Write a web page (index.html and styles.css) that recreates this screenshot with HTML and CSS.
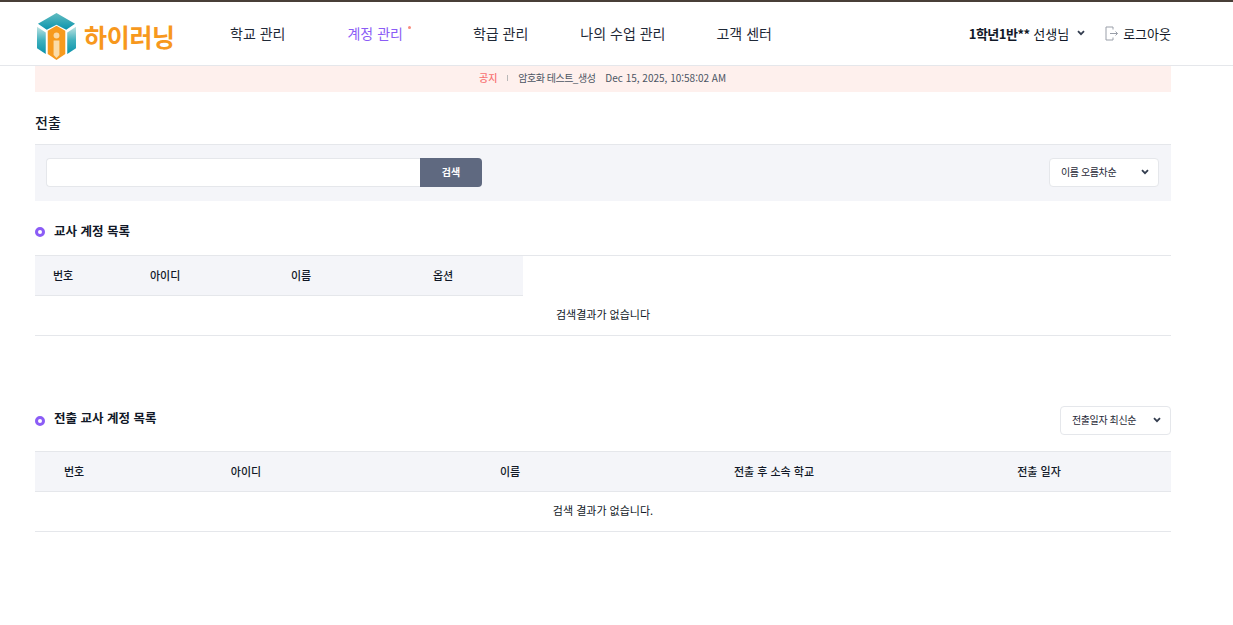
FILE: index.html
```html
<!DOCTYPE html>
<html lang="ko">
<head>
    <meta charset="UTF-8">
    <meta name="viewport" content="width=device-width, initial-scale=1.0">
    <title>전출</title>
    <link rel="stylesheet" href="styles.css">
</head>
<body>

    <header class="header">
        <div class="header-inner">
            <a class="logo" href="#">
                <svg class="logo-mark" width="39" height="47" viewBox="0 0 40 48">
                    <defs>
                        <linearGradient id="sideGrad" x1="0" y1="0" x2="0" y2="1">
                            <stop offset="0" stop-color="#bfe3e2"/>
                            <stop offset="0.5" stop-color="#3fb0bd"/>
                            <stop offset="1" stop-color="#0a93ab"/>
                        </linearGradient>
                        <linearGradient id="topGrad" x1="0" y1="0" x2="0" y2="1">
                            <stop offset="0" stop-color="#62bcc0"/>
                            <stop offset="1" stop-color="#0b94ae"/>
                        </linearGradient>
                    </defs>
                    <path d="M20 0 L39 11 L30 17 L20 12 L10 17 L1 11 Z" fill="url(#topGrad)"/>
                    <path d="M0 14 L9 20 L9 42 L0 36 Z" fill="url(#sideGrad)"/>
                    <path d="M40 14 L31 20 L31 42 L40 36 Z" fill="url(#sideGrad)"/>
                    <path d="M20 13 L29 18 L29 42 L20 48 L11 42 L11 18 Z" fill="#f79a1e"/>
                    <circle cx="20" cy="23" r="3" fill="#fbd9a5"/>
                    <path d="M17 28 H23 V43 L20 46 L17 43 Z" fill="#fbdca9"/>
                </svg>
                <span class="logo-text">하이러닝</span>
            </a>
            <nav class="gnb">
                <a class="gnb-item" href="#">학교 관리</a>
                <a class="gnb-item active" href="#">계정 관리<span class="dot"></span></a>
                <a class="gnb-item" href="#">학급 관리</a>
                <a class="gnb-item" href="#">나의 수업 관리</a>
                <a class="gnb-item" href="#">고객 센터</a>
            </nav>
            <div class="user-area">
                <span class="user-name"><strong>1학년1반**</strong> 선생님</span>
                <svg class="chev" width="8" height="6" viewBox="0 0 8 6"><path d="M1 1.2 L4 4.2 L7 1.2" fill="none" stroke="#333d4f" stroke-width="1.8"/></svg>
                <a class="logout" href="#">
                    <svg width="13" height="15" viewBox="0 0 13 15"><path d="M8 3.5 V1 H1 V14 H8 V11.5 M5 7.5 H12.5 M10.5 5.5 L12.5 7.5 L10.5 9.5" fill="none" stroke="#9a9fa9" stroke-width="1"/></svg>
                    로그아웃
                </a>
            </div>
        </div>
    </header>

    <main class="container">
        <div class="notice">
            <span class="notice-label">공지</span>
            <span class="notice-sep"></span>
            <span class="notice-title">암호화 테스트_생성</span>
            <span class="notice-date">Dec 15, 2025, 10:58:02 AM</span>
        </div>

        <h1 class="page-title">전출</h1>

        <form class="search-box">
            <div class="search-group">
                <input class="search-input" type="text">
                <button class="search-btn" type="button">검색</button>
            </div>
            <div class="select-box select-name">
                이름 오름차순
                <svg width="8" height="6" viewBox="0 0 8 6"><path d="M1 1.2 L4 4.2 L7 1.2" fill="none" stroke="#333d4f" stroke-width="1.8"/></svg>
            </div>
        </form>

        <section class="section-first">
            <h2 class="section-title">교사 계정 목록</h2>
            <div class="table-wrap">
                <table class="table table-short">
                    <colgroup>
                        <col class="c1"><col class="c2"><col class="c3"><col class="c4">
                    </colgroup>
                    <thead>
                        <tr><th>번호</th><th>아이디</th><th>이름</th><th>옵션</th></tr>
                    </thead>
                </table>
                <div class="no-result">검색결과가 없습니다</div>
            </div>
        </section>

        <section class="section-second">
            <div class="section-head">
                <h2 class="section-title">전출 교사 계정 목록</h2>
                <div class="select-box select-date">
                    전출일자 최신순
                    <svg width="8" height="6" viewBox="0 0 8 6"><path d="M1 1.2 L4 4.2 L7 1.2" fill="none" stroke="#333d4f" stroke-width="1.8"/></svg>
                </div>
            </div>
            <table class="table table-full">
                <colgroup>
                    <col class="d1"><col class="d2"><col class="d3"><col class="d4"><col class="d5">
                </colgroup>
                <thead>
                    <tr><th>번호</th><th>아이디</th><th>이름</th><th>전출 후 소속 학교</th><th>전출 일자</th></tr>
                </thead>
                <tbody>
                    <tr><td colspan="5">검색 결과가 없습니다.</td></tr>
                </tbody>
            </table>
        </section>
    </main>

</body>
</html>
```

FILE: styles.css
```css
* {
    box-sizing: border-box;
}
body {
    margin: 0;
    background-color: #ffffff;
    color: #111827;
    font-family: "Noto Sans CJK KR", "Noto Sans", sans-serif;
    font-size: 14px;
}
a {
    color: inherit;
    text-decoration: none;
}

/* header */
.header {
    height: 66px;
    border-top: 2px solid #483f38;
    border-bottom: 1px solid #e5e7eb;
}
.header-inner {
    display: flex;
    align-items: center;
    height: 63px;
    padding: 0 62px 0 37px;
}
.logo {
    display: flex;
    align-items: center;
    gap: 8px;
    width: 193px;
    margin-top: 6px;
}
.logo-mark {
    flex: none;
}
.logo-text {
    color: #f7981d;
    font-size: 25px;
    font-weight: 700;
    letter-spacing: -0.3px;
    line-height: 1;
}
.gnb {
    display: flex;
    flex: 1;
    padding-bottom: 2px;
    font-size: 14px;
}
.gnb-item {
    position: relative;
    margin-right: 62px;
    color: #1f2937;
    white-space: nowrap;
}
.gnb-item:nth-child(2) {
    margin-right: 70px;
}
.gnb-item:nth-child(3) {
    margin-right: 52px;
}
.gnb-item:nth-child(4) {
    margin-right: 51px;
}
.gnb-item.active {
    color: #8b5cf6;
}
.dot {
    position: absolute;
    top: 3px;
    right: -8px;
    width: 3px;
    height: 3px;
    border-radius: 50%;
    background-color: #f98a7c;
}
.user-area {
    display: flex;
    align-items: center;
    padding-bottom: 1px;
    font-size: 13px;
}
.user-name strong {
    font-weight: 700;
    letter-spacing: -0.5px;
}
.chev {
    margin-left: 8px;
}
.logout {
    display: flex;
    align-items: center;
    gap: 5px;
    margin-left: 20px;
}

/* main */
.container {
    width: 1136px;
    margin-left: 35px;
}
.notice {
    display: flex;
    align-items: center;
    justify-content: center;
    height: 26px;
    padding-right: 1px;
    padding-bottom: 3px;
    background-color: #fef0ed;
    font-size: 10px;
    color: #4b5563;
}
.notice-label {
    color: #f87171;
    font-weight: 500;
}
.notice-sep {
    width: 1px;
    height: 6px;
    margin: 1px 10px 0 10px;
    background-color: #b8b8b8;
}
.notice-title {
    margin-right: 10px;
    letter-spacing: -0.5px;
}
.page-title {
    margin: 0;
    padding-top: 19px;
    height: 52px;
    font-size: 14px;
    font-weight: 500;
    line-height: 22px;
}
.search-box {
    display: flex;
    align-items: center;
    justify-content: space-between;
    height: 57px;
    padding: 0 12px 2px 11px;
    background-color: #f4f5f9;
    border-top: 1px solid #e5e7eb;
}
.search-group {
    display: flex;
    height: 29px;
}
.search-input {
    width: 374px;
    height: 29px;
    padding: 0 10px;
    background-color: #ffffff;
    border: 1px solid #e5e7eb;
    border-right: 0;
    border-radius: 4px 0 0 4px;
    outline: none;
}
.search-btn {
    width: 62px;
    height: 29px;
    padding: 0 0 2px;
    border: none;
    border-radius: 0 4px 4px 0;
    background-color: #5f6980;
    color: #ffffff;
    font-family: inherit;
    font-size: 10px;
    font-weight: 700;
}
.select-box {
    display: flex;
    align-items: center;
    justify-content: space-between;
    height: 29px;
    padding: 0 9px 1px 11px;
    background-color: #ffffff;
    border: 1px solid #e5e7eb;
    border-radius: 4px;
    font-size: 10px;
    letter-spacing: -0.4px;
    color: #1f2937;
}
.select-name {
    width: 110px;
}
.select-date {
    width: 111px;
}
.section-first {
    padding-top: 20px;
}
.section-title {
    position: relative;
    margin: 0;
    padding-left: 19px;
    font-size: 12.5px;
    font-weight: 700;
    line-height: 20px;
}
.section-title::before {
    content: "";
    position: absolute;
    left: 0;
    top: 6px;
    box-sizing: border-box;
    width: 10px;
    height: 10px;
    border: 3px solid #8b5cf6;
    border-radius: 50%;
}

/* tables */
.table {
    border-collapse: collapse;
    table-layout: fixed;
    font-size: 11px;
}
.table th {
    height: 40px;
    padding: 0 0 1px;
    background-color: #f4f5f9;
    border-bottom: 1px solid #e5e7eb;
    font-weight: 500;
}
.table-wrap {
    margin-top: 14px;
    border-top: 1px solid #e5e7eb;
}
.table-short {
    width: 488px;
}
.table-short th {
    height: 39px;
    padding-left: 18px;
    text-align: left;
}
.c1 { width: 97px; }
.c2 { width: 141px; }
.c3 { width: 142px; }
.c4 { width: 108px; }
.no-result {
    height: 40px;
    border-bottom: 1px solid #e5e7eb;
    font-size: 11px;
    line-height: 37px;
    text-align: center;
}
.section-second {
    padding-top: 70px;
}
.section-head {
    display: flex;
    align-items: flex-start;
    justify-content: space-between;
    height: 45px;
}
.section-head .section-title {
    margin-top: 2px;
}
.section-head .section-title::before {
    top: 8px;
}
.table-full {
    width: 100%;
    border-top: 1px solid #e5e7eb;
}
.table-full th {
    text-align: center;
}
.table-full td {
    height: 40px;
    padding-bottom: 3px;
    border-bottom: 1px solid #e5e7eb;
    text-align: center;
}
.d1 { width: 78px; }
.d2 { width: 266px; }
.d3 { width: 262px; }
.d4 { width: 266px; }
.d5 { width: 264px; }
```
